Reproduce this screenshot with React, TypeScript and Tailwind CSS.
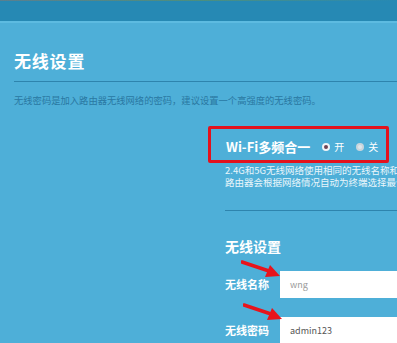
import React from 'react';

const font = { fontFamily: '"Noto Sans CJK SC", "Noto Sans", sans-serif' };

function Arrow() {
  return (
    <svg width="40" height="18" viewBox="0 0 40 18" className="block">
      <line x1="1" y1="2" x2="28" y2="11" stroke="#e8141c" strokeWidth="3.5" strokeLinecap="round" />
      <polygon points="39,16 24,17 29,5" fill="#e8141c" />
    </svg>
  );
}

function Radio({ checked, label }: { checked: boolean; label: string }) {
  return (
    <div className="flex shrink-0 items-center gap-[4px]">
      <span
        className={
          checked
            ? 'flex h-[8px] w-[8px] items-center justify-center rounded-full bg-[#f2f4f6]'
            : 'flex h-[8px] w-[8px] items-center justify-center rounded-full bg-[#c9d5dc]'
        }
      >
        <span className={checked ? 'h-[4px] w-[4px] rounded-full bg-[#6e4455]' : 'h-[4px] w-[4px] rounded-full bg-[#dde5ea]'} />
      </span>
      <span className="text-[10px] leading-[12px] text-white">{label}</span>
    </div>
  );
}

export default function App() {
  return (
    <div className="relative h-[343px] w-[397px] overflow-hidden bg-[#4eafd8]" style={font}>
      {/* top bar */}
      <div className="h-[21px] bg-[#2689b4]">
        <div className="h-[1px] bg-gradient-to-r from-[#5a7f8f] via-[#4c8f7e] to-[#2689b4]" />
      </div>
      <div className="h-[2px] bg-[#5dbbe1]" />

      <div className="flex flex-col pl-[14px]">
        <h1 className="mt-[28px] text-[17px] font-bold leading-[20px] tracking-[0.8px] text-white">无线设置</h1>
        <div className="mt-[10px] h-[1px] bg-[#2e84ad]" />
        <p className="mt-[12px] whitespace-nowrap text-[9.3px] leading-[12px] text-[#2a78a2]">
          无线密码是加入路由器无线网络的密码，建议设置一个高强度的无线密码。
        </p>

        <div className="ml-[211px] flex flex-col">
          {/* Wi-Fi merge, boxed */}
          <div className="-ml-[17px] mt-[20px] flex h-[37px] w-[181px] shrink-0 items-center rounded-[2px] border-[3px] border-[#e3121d] pl-[15px] pt-[4px]">
            <span className="shrink-0 whitespace-nowrap text-[13px] font-bold leading-[16px] text-white">Wi-Fi多频合一</span>
            <div className="ml-[12px] flex shrink-0 items-center gap-[12px]">
              <Radio checked label="开" />
              <Radio checked={false} label="关" />
            </div>
          </div>
          <div className="mt-[1px] whitespace-nowrap text-[9.5px] leading-[12px] text-[#eaf6fb]">
            <div>2.4G和5G无线网络使用相同的无线名称和密码</div>
            <div>路由器会根据网络情况自动为终端选择最佳频段</div>
          </div>
          <div className="mt-[22px] h-[1px] bg-[#2e84ad]" />

          <h2 className="mt-[27px] text-[14px] font-bold leading-[16px] text-white">无线设置</h2>

          <div className="mt-[17px] flex items-center">
            <span className="w-[55px] text-[11px] font-bold text-white">无线名称</span>
            <div className="flex h-[27px] flex-1 items-center bg-white pl-[10px] text-[9px] text-[#9a9a9a]">wng</div>
          </div>
          <div className="mt-[19px] flex items-center">
            <span className="w-[55px] text-[11px] font-bold text-white">无线密码</span>
            <div className="flex h-[27px] flex-1 items-center bg-white pl-[10px] text-[9px] text-[#555]">admin123</div>
          </div>
        </div>
      </div>

      {/* annotation arrows */}
      <div className="absolute left-[241px] top-[260px]">
        <Arrow />
      </div>
      <div className="absolute left-[243px] top-[303px]">
        <Arrow />
      </div>
    </div>
  );
}
